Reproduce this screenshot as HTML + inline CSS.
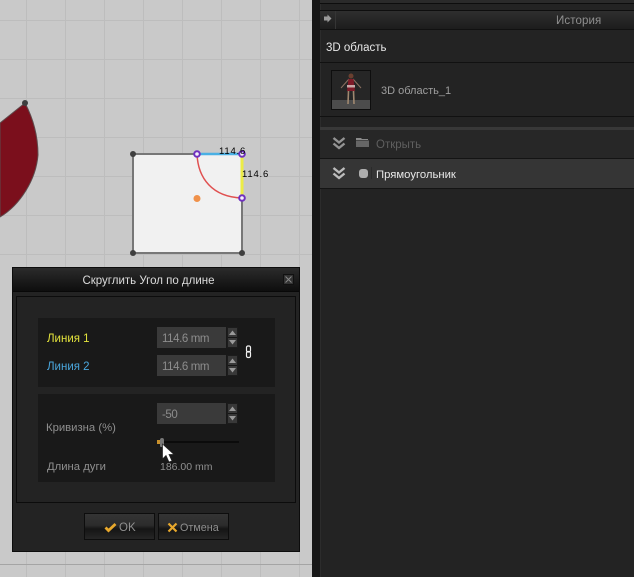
<!DOCTYPE html>
<html><head><meta charset="utf-8">
<style>
html,body{margin:0;padding:0;background:#c8c8c8;}
#p{position:relative;width:634px;height:577px;overflow:hidden;background:#c9c9c9;font-family:"Liberation Sans","DejaVu Sans",sans-serif;font-size:11px;}
#p div,#p span{position:absolute;box-sizing:border-box;white-space:nowrap;}
.inp{left:157px;width:69px;height:21px;background:#3a3a3a;color:#8d8d8d;padding-left:5px;line-height:24px;font-size:11.500px;letter-spacing:-0.400px;}
.spin{left:227px;width:11px;height:21px;background:#383838;border:1px solid #1c1c1c;}
.t{line-height:14px;}
</style></head><body>
<div id="p">
<svg width="634" height="577" style="position:absolute;left:0;top:0">
<g stroke="#bdbdbd" stroke-width="1" fill="none">
<path d="M26.500 0V577M65.500 0V577M104.500 0V577M143.500 0V577M182.500 0V577M221.500 0V577M260.500 0V577M299.500 0V577"/>
<path d="M0 20.500H312M0 59.500H312M0 98.500H312M0 137.500H312M0 176.500H312M0 215.500H312M0 254.500H312"/>
</g>
<path d="M0 564.500H312" stroke="#a4a4a4"/>
<path d="M0 123 L25 103 C34 120 38 138 38 155 C36 180 20 205 0 217 Z" fill="#7b0f1c" stroke="#5e4a4c" stroke-width="1"/>
<circle cx="25" cy="103" r="3" fill="#3f3f3f"/>
<rect x="133" y="154" width="109" height="99" rx="2" fill="#f1f1f1" stroke="#777" stroke-width="2"/>
<circle cx="133" cy="154" r="3" fill="#3f3f3f"/>
<circle cx="133" cy="253" r="3" fill="#3f3f3f"/>
<circle cx="242" cy="253" r="3" fill="#3f3f3f"/>
<path d="M197 154H242" stroke="#4ab0e4" stroke-width="2.500"/>
<path d="M242 154V198" stroke="#ecec46" stroke-width="3"/>
<path d="M197 154C198 178 212 197 242 198" stroke="#e05050" stroke-width="1.500" fill="none"/>
<circle cx="197" cy="198.500" r="3.500" fill="#f0914a"/>
<g fill="#f4f0fa" stroke="#7030c0" stroke-width="2">
<circle cx="197" cy="154" r="2.800"/><circle cx="242" cy="154" r="2.800"/><circle cx="242" cy="198" r="2.800"/>
</g>
<text x="219" y="154" font-family="Liberation Sans" font-size="9.500" letter-spacing="0.800" fill="#000">114.6</text>
<text x="242" y="177" font-family="Liberation Sans" font-size="9.500" letter-spacing="0.800" fill="#000">114.6</text>
</svg>

<!-- right side -->
<div style="left:312px;top:0;width:322px;height:577px;background:#232323"></div>
<div style="left:312px;top:0;width:8px;height:577px;background:#171717"></div>
<div style="left:320px;top:0;width:1px;height:577px;background:#2c2c2c"></div>
<div style="left:320px;top:0;width:314px;height:4px;background:#2a2a2a;border-bottom:1px solid #0d0d0d"></div>
<div style="left:320px;top:10px;width:314px;height:20px;background:linear-gradient(#2f2f2f,#1d1d1d);border-top:1px solid #0e0e0e;border-bottom:1px solid #111"></div>
<div style="left:335px;top:11px;width:1px;height:18px;background:#353535"></div>
<svg width="12" height="12" style="position:absolute;left:323px;top:13px"><path d="M1 3.500H4.500V1.500L8.500 5.500L4.500 9.500V7.500H1Z" fill="#9a9a9a"/></svg>
<div class="t" style="left:556px;top:14px;color:#8f8f8f;font-size:11.500px;letter-spacing:0.100px">История</div>
<div class="t" style="left:326px;top:41px;color:#e6e6e6;font-size:11.500px">3D область</div>
<div style="left:320px;top:62px;width:314px;height:1px;background:#111"></div>
<div style="left:331px;top:70px;width:40px;height:40px;background:#262626;border:1px solid #0e0e0e"></div>
<svg width="38" height="38" style="position:absolute;left:332px;top:71px">
<rect x="0" y="29" width="38" height="9" fill="#4c4c4c"/>
<path d="M9 17L17 8M29 17L21 8" stroke="#8a7060" stroke-width="1"/>
<circle cx="19" cy="5" r="2.500" fill="#6a4030"/>
<path d="M16.500 8H21.500L23 20H15Z" fill="#7e1a28"/>
<path d="M15 14H23V16.500H15Z" fill="#c8a8a8"/>
<path d="M16.500 20L16 33M21.500 20L22 33" stroke="#a08870" stroke-width="1.600"/>
</svg>
<div class="t" style="left:381px;top:84px;color:#9f9f9f;font-size:11px">3D область_1</div>
<div style="left:320px;top:116px;width:314px;height:1px;background:#111"></div>
<div style="left:320px;top:127px;width:314px;height:3px;background:#383838"></div>
<div style="left:320px;top:130px;width:314px;height:29px;background:#272727;border-bottom:1px solid #141414"></div>
<div style="left:320px;top:159px;width:314px;height:30px;background:#353535;border-bottom:1px solid #141414"></div>
<svg width="15" height="15" style="position:absolute;left:332px;top:136px" fill="none" stroke="#949494" stroke-width="2.400"><path d="M1.500 2L7 6.500L12.500 2M1.500 7.500L7 12L12.500 7.500"/></svg>
<svg width="15" height="15" style="position:absolute;left:332px;top:166px" fill="none" stroke="#bcbcbc" stroke-width="2.400"><path d="M1.500 2L7 6.500L12.500 2M1.500 7.500L7 12L12.500 7.500"/></svg>
<svg width="15" height="12" style="position:absolute;left:355px;top:137px"><path d="M1 1H6L7 2H13V3H1Z" fill="#8a8a8a"/><path d="M1 3.500H14V10H1Z" fill="#666"/></svg>
<svg width="12" height="12" style="position:absolute;left:358px;top:168px"><rect x="1" y="1" width="9" height="9" rx="3" fill="#aeaeae"/></svg>
<div style="left:371px;top:167px;width:1px;height:12px;background:#2a2a2a"></div>
<div class="t" style="left:376px;top:138px;color:#5f5f5f;font-size:11.500px">Открыть</div>
<div class="t" style="left:376px;top:168px;color:#e8e8e8;font-size:11.300px">Прямоугольник</div>

<!-- dialog -->
<div style="left:12px;top:267px;width:288px;height:285px;background:#232323;border:1px solid #0c0c0c"></div>
<div style="left:13px;top:268px;width:286px;height:24px;background:linear-gradient(#2b2b2b,#0e0e0e);border-bottom:1px solid #080808"></div>
<div class="t" style="left:13px;top:274px;width:271px;text-align:center;color:#dcdcdc;font-size:11.500px">Скруглить Угол по длине</div>
<div style="left:283px;top:274px;width:11px;height:11px;background:#333;border:1px solid #111"></div>
<svg width="9" height="9" style="position:absolute;left:284px;top:275px"><path d="M1.500 1.500L7.500 7.500M7.500 1.500L1.500 7.500" stroke="#888" stroke-width="1"/></svg>
<div style="left:16px;top:296px;width:280px;height:207px;background:#232323;border:1px solid #0c0c0c"></div>
<div style="left:38px;top:318px;width:237px;height:69px;background:#191919"></div>
<div style="left:38px;top:394px;width:237px;height:88px;background:#191919"></div>
<div class="t" style="left:47px;top:332px;color:#e2e23c;font-size:11.500px">Линия 1</div>
<div class="t" style="left:47px;top:360px;color:#4aa6dc;font-size:11.500px">Линия 2</div>
<div class="inp" style="top:327px">114.6 mm</div>
<div class="inp" style="top:355px">114.6 mm</div>
<div class="inp" style="top:403px">-50</div>
<div class="spin" style="top:327px"></div><div class="spin" style="top:355px"></div><div class="spin" style="top:403px"></div>
<svg width="11" height="100" style="position:absolute;left:227px;top:327px" fill="#9a9a9a">
<path d="M2 8L5.500 3.500L9 8ZM2 13L5.500 17.500L9 13Z"/>
<path d="M2 36L5.500 31.500L9 36ZM2 41L5.500 45.500L9 41Z"/>
<path d="M2 84L5.500 79.500L9 84ZM2 89L5.500 93.500L9 89Z"/>
<path d="M1 10.500H10M1 38.500H10M1 86.500H10" stroke="#151515"/>
</svg>
<svg width="8" height="14" style="position:absolute;left:245px;top:345px" fill="none" stroke="#f0f0f0" stroke-width="1.200"><rect x="1.500" y="1" width="4" height="6" rx="1.500"/><rect x="1.500" y="6.500" width="4" height="6" rx="1.500"/></svg>
<div class="t" style="left:46px;top:421px;color:#8f8f8f;font-size:11.300px">Кривизна (%)</div>
<div class="t" style="left:47px;top:460px;color:#8f8f8f;font-size:11.300px">Длина дуги</div>
<div class="t" style="left:160px;top:460px;color:#8f8f8f;font-size:10.500px">186.00 mm</div>
<div style="left:157px;top:441px;width:82px;height:2px;background:#0b0b0b"></div>
<div style="left:157px;top:440px;width:3px;height:4px;background:#c8902c"></div>
<div style="left:160px;top:438px;width:4px;height:9px;background:#777;border-radius:2px 2px 1px 1px"></div>
<svg width="16" height="22" style="position:absolute;left:161px;top:443px"><path d="M1.500 1V16L5 12.500L8 19L11 18L8 11.500H13Z" fill="#fff" stroke="#222" stroke-width="0.700"/></svg>

<div style="left:84px;top:513px;width:71px;height:27px;background:linear-gradient(#343434,#2c2c2c 45%,#151515 60%,#262626);border:1px solid #0d0d0d"></div>
<div style="left:158px;top:513px;width:71px;height:27px;background:linear-gradient(#343434,#2c2c2c 45%,#151515 60%,#262626);border:1px solid #0d0d0d"></div>
<svg width="13" height="12" style="position:absolute;left:104px;top:521px"><path d="M1.500 6.500L4.500 9.500L11.500 3" fill="none" stroke="#e8a82c" stroke-width="2.800"/></svg>
<svg width="12" height="12" style="position:absolute;left:167px;top:522px"><path d="M1.500 1.500L9.500 9.500M9.500 1.500L1.500 9.500" fill="none" stroke="#e8a82c" stroke-width="2.200"/></svg>
<div class="t" style="left:119px;top:521px;color:#8f8f8f;font-size:11.500px">OK</div>
<div class="t" style="left:180px;top:521px;color:#8f8f8f;font-size:10.800px">Отмена</div>
</div>
</body></html>
